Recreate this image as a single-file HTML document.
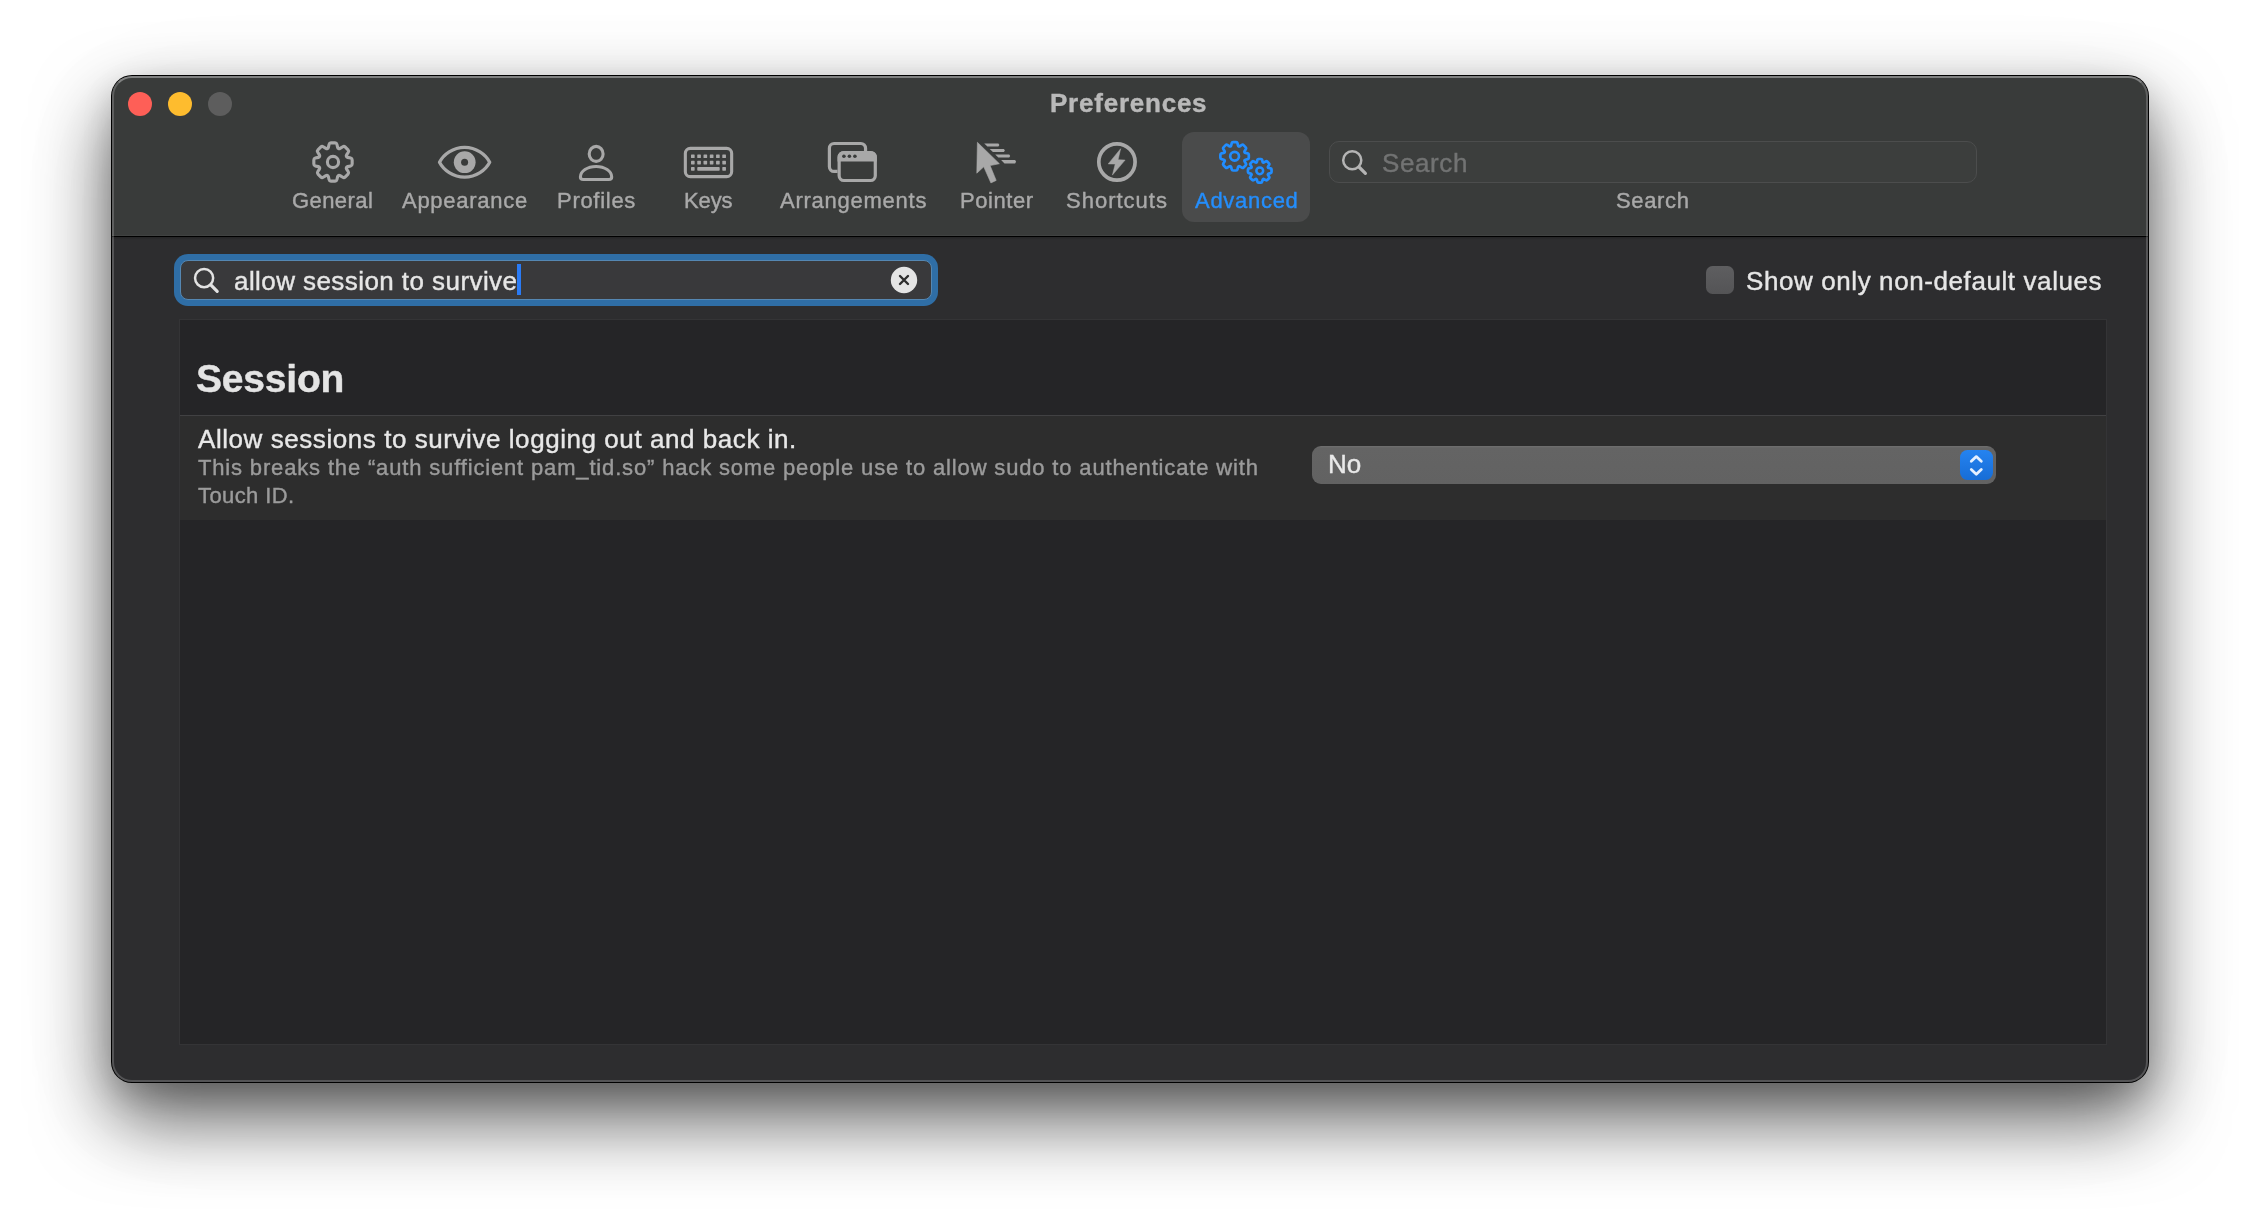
<!DOCTYPE html>
<html lang="en"><head><meta charset="utf-8"><title>Preferences</title>
<style>
html,body{margin:0;padding:0;}
body{width:2260px;height:1230px;background:#fff;position:relative;overflow:hidden;font-family:"Liberation Sans",sans-serif;}
.abs{position:absolute;}
#win{position:absolute;left:111px;top:75px;width:2038px;height:1008px;border-radius:21px;background:#000;
 box-shadow:0 36px 76px 0 rgba(0,0,0,.62),0 12px 30px rgba(0,0,0,.14),0 24px 120px rgba(0,0,0,.05);}
#winin{position:absolute;left:1px;top:1px;right:1px;bottom:1px;border-radius:20px;overflow:hidden;background:#2d2d2f;}
#winhl{position:absolute;left:1px;top:1px;right:1px;bottom:1px;border-radius:20px;border:2px solid rgba(255,255,255,.19);border-top-color:rgba(255,255,255,.36);box-sizing:border-box;pointer-events:none;}
#tb{position:absolute;left:0;top:0;right:0;height:160px;background:#393b3a;}
#tbsep{position:absolute;left:0;right:0;top:160px;height:1px;background:#000;box-shadow:0 -1px 0 rgba(255,255,255,.04);}
#tbsh{position:absolute;left:0;right:0;top:161px;height:3px;background:linear-gradient(rgba(0,0,0,.2),rgba(0,0,0,0));}
.t{position:absolute;white-space:nowrap;line-height:1;will-change:transform;-webkit-text-stroke:.4px currentColor;}
.lbl{font-size:22px;color:#a9a9a9;}
.ic{position:absolute;overflow:visible;}
</style></head><body>
<div id="win"><div id="winin">
 <div id="tb"></div><div id="tbsep"></div><div id="tbsh"></div>
</div><div id="winhl"></div></div>

<!-- traffic lights -->
<div class="abs" style="left:127.8px;top:91.900px;width:24.400px;height:24.400px;border-radius:50%;background:#fe5f57;"></div>
<div class="abs" style="left:167.8px;top:91.900px;width:24.400px;height:24.400px;border-radius:50%;background:#febc2e;"></div>
<div class="abs" style="left:207.8px;top:91.900px;width:24.400px;height:24.400px;border-radius:50%;background:#5d5d5d;"></div>

<div class="t" id="title" style="left:1050px;top:90px;font-size:26px;font-weight:700;color:#b9b9b9;letter-spacing:.77px;">Preferences</div>

<!-- selected tab bg -->
<div class="abs" style="left:1182px;top:132px;width:128px;height:90px;border-radius:12px;background:#4a4b4b;"></div>

<!-- toolbar icons -->
<svg class="ic" id="i-general" style="left:312px;top:141px" width="42" height="42" viewBox="0 0 42 42" fill="none" stroke="#a8a8a8" stroke-width="3.1" stroke-linejoin="round">
 <path d="M15.46 7.62Q16.16 7.33 16.38 6.38L17.11 3.25Q17.45 1.83 18.91 1.83L23.09 1.83Q24.55 1.83 24.89 3.25L25.62 6.38Q25.84 7.33 26.54 7.62L26.54 7.62Q27.24 7.91 28.07 7.40L30.80 5.70Q32.04 4.93 33.08 5.96L36.04 8.92Q37.07 9.96 36.30 11.20L34.60 13.93Q34.09 14.76 34.38 15.46L34.38 15.46Q34.67 16.16 35.62 16.38L38.75 17.11Q40.17 17.45 40.17 18.91L40.17 23.09Q40.17 24.55 38.75 24.89L35.62 25.62Q34.67 25.84 34.38 26.54L34.38 26.54Q34.09 27.24 34.60 28.07L36.30 30.80Q37.07 32.04 36.04 33.08L33.08 36.04Q32.04 37.07 30.80 36.30L28.07 34.60Q27.24 34.09 26.54 34.38L26.54 34.38Q25.84 34.67 25.62 35.62L24.89 38.75Q24.55 40.17 23.09 40.17L18.91 40.17Q17.45 40.17 17.11 38.75L16.38 35.62Q16.16 34.67 15.46 34.38L15.46 34.38Q14.76 34.09 13.93 34.60L11.20 36.30Q9.96 37.07 8.92 36.04L5.96 33.08Q4.93 32.04 5.70 30.80L7.40 28.07Q7.91 27.24 7.62 26.54L7.62 26.54Q7.33 25.84 6.38 25.62L3.25 24.89Q1.83 24.55 1.83 23.09L1.83 18.91Q1.83 17.45 3.25 17.11L6.38 16.38Q7.33 16.16 7.62 15.46L7.62 15.46Q7.91 14.76 7.40 13.93L5.70 11.20Q4.93 9.96 5.96 8.92L8.92 5.96Q9.96 4.93 11.20 5.70L13.93 7.40Q14.76 7.91 15.46 7.62Z"/><circle cx="21" cy="21" r="5.6"/></svg>

<svg class="ic" id="i-appearance" style="left:436px;top:143px" width="58" height="38" viewBox="0 0 58 38" fill="none" stroke="#a8a8a8" stroke-width="3.3">
 <path d="M3.5 19.3C7.5 11.5 17 4.45 28.6 4.45S49.7 11.5 53.7 19.3C49.7 27.1 40.2 34.15 28.6 34.15S7.5 27.1 3.5 19.3Z" stroke-linejoin="round"/>
 <circle cx="28.7" cy="19.2" r="10.9" fill="#a8a8a8" stroke="none"/><circle cx="28.6" cy="19.2" r="3.5" fill="#393b3a" stroke="none"/></svg>

<svg class="ic" id="i-profiles" style="left:576px;top:143px" width="40" height="40" viewBox="0 0 40 40" fill="none" stroke="#a8a8a8" stroke-width="3.1">
 <ellipse cx="20.15" cy="10.9" rx="6.95" ry="7.5"/>
 <path d="M7.2 36.55C5.2 36.55 4.4 35.6 4.4 34C4.4 28.2 11.4 23.45 20.05 23.45S35.7 28.2 35.7 34C35.7 35.6 34.9 36.55 32.9 36.55Z" stroke-linejoin="round"/></svg>

<svg class="ic" id="i-keys" style="left:682px;top:145px" width="54" height="36" viewBox="0 0 54 36" fill="none" stroke="#a8a8a8" stroke-width="3.1">
 <rect x="3.35" y="3.35" width="46.3" height="28.3" rx="5"/>
 <g fill="#a8a8a8" stroke="none"><rect x="9.0" y="9.4" width="3.65" height="3.6" rx=".6"/><rect x="15.25" y="9.4" width="3.65" height="3.6" rx=".6"/><rect x="21.5" y="9.4" width="3.65" height="3.6" rx=".6"/><rect x="27.8" y="9.4" width="3.65" height="3.6" rx=".6"/><rect x="34.05" y="9.4" width="3.65" height="3.6" rx=".6"/><rect x="40.3" y="9.4" width="3.65" height="3.6" rx=".6"/><rect x="9.0" y="15.8" width="3.65" height="3.6" rx=".6"/><rect x="15.25" y="15.8" width="3.65" height="3.6" rx=".6"/><rect x="21.5" y="15.8" width="3.65" height="3.6" rx=".6"/><rect x="27.8" y="15.8" width="3.65" height="3.6" rx=".6"/><rect x="34.05" y="15.8" width="3.65" height="3.6" rx=".6"/><rect x="40.3" y="15.8" width="3.65" height="3.6" rx=".6"/><rect x="9" y="22.1" width="3.65" height="3.6" rx=".6"/><rect x="15.25" y="22.1" width="22.45" height="3.6" rx=".8"/><rect x="40.3" y="22.1" width="3.65" height="3.6" rx=".6"/></g></svg>

<svg class="ic" id="i-arr" style="left:826px;top:140px" width="54" height="44" viewBox="0 0 54 44" fill="none" stroke="#a8a8a8" stroke-width="3.2">
 <path d="M11.55 31.4H8.1A4.7 4.7 0 0 1 3.4 26.7V8.2A4.7 4.7 0 0 1 8.1 3.5H34.85A4.7 4.7 0 0 1 39.55 8.2V11"/>
 <rect x="13.15" y="12.6" width="36.15" height="27.9" rx="4.7"/>
 <path d="M11.55 21.4V17.3A6.3 6.3 0 0 1 17.85 11H44.6A6.3 6.3 0 0 1 50.9 17.3V21.4Z" fill="#a8a8a8" stroke="none"/>
 <g fill="#393b3a" stroke="none"><circle cx="17.9" cy="16.3" r="1.8"/><circle cx="23.4" cy="16.3" r="1.8"/><circle cx="28.9" cy="16.3" r="1.8"/></g></svg>

<svg class="ic" id="i-pointer" style="left:974px;top:140px" width="46" height="46" viewBox="0 0 46 46" fill="#a8a8a8" stroke="none">
 <path d="M3.4 2.3L2.8 33.2L9.75 26.85L16.9 42.9L22.2 40.4L16.1 25.6L25.4 23.7Z" stroke="#a8a8a8" stroke-width=".6" stroke-linejoin="round"/>
 <path d="M10.2 3.4H24.4L25.4 5.00L24.4 6.6H13.40Z"/><path d="M15.7 8.9H29.9L30.9 10.50L29.9 12.1H18.90Z"/><path d="M21.2 14.4H35.2L36.2 15.98L35.2 17.55H24.35Z"/><path d="M27.1 20.1H41.1L42.1 21.80L41.1 23.5H30.50Z"/></svg>

<svg class="ic" id="i-short" style="left:1095px;top:140px" width="44" height="44" viewBox="0 0 44 44" fill="none" stroke="#a8a8a8" stroke-width="3.7">
 <circle cx="21.95" cy="22" r="18.15"/>
 <path d="M25.65 8.7L13.2 23.9L20.2 24.1L17.4 35.1L30.1 20.1L23.1 19.7Z" fill="#a8a8a8" stroke="#a8a8a8" stroke-width=".5" stroke-linejoin="round"/></svg>

<svg class="ic" id="i-adv" style="left:1215px;top:138px" width="62" height="50" viewBox="0 0 62 50" fill="none" stroke="#218dff" stroke-width="2.7" stroke-linejoin="round">
 <g transform="translate(19.6 18.3)"><path d="M-4.09 -9.87Q-3.57 -10.09 -3.41 -10.79L-2.87 -13.15Q-2.63 -14.21 -1.55 -14.21L1.55 -14.21Q2.63 -14.21 2.87 -13.15L3.41 -10.79Q3.57 -10.09 4.09 -9.87L4.09 -9.87Q4.61 -9.66 5.22 -10.04L7.27 -11.33Q8.18 -11.91 8.95 -11.14L11.14 -8.95Q11.91 -8.18 11.33 -7.27L10.04 -5.22Q9.66 -4.61 9.87 -4.09L9.87 -4.09Q10.09 -3.57 10.79 -3.41L13.15 -2.87Q14.21 -2.63 14.21 -1.55L14.21 1.55Q14.21 2.63 13.15 2.87L10.79 3.41Q10.09 3.57 9.87 4.09L9.87 4.09Q9.66 4.61 10.04 5.22L11.33 7.27Q11.91 8.18 11.14 8.95L8.95 11.14Q8.18 11.91 7.27 11.33L5.22 10.04Q4.61 9.66 4.09 9.87L4.09 9.87Q3.57 10.09 3.41 10.79L2.87 13.15Q2.63 14.21 1.55 14.21L-1.55 14.21Q-2.63 14.21 -2.87 13.15L-3.41 10.79Q-3.57 10.09 -4.09 9.87L-4.09 9.87Q-4.61 9.66 -5.22 10.04L-7.27 11.33Q-8.18 11.91 -8.95 11.14L-11.14 8.95Q-11.91 8.18 -11.33 7.27L-10.04 5.22Q-9.66 4.61 -9.87 4.09L-9.87 4.09Q-10.09 3.57 -10.79 3.41L-13.15 2.87Q-14.21 2.63 -14.21 1.55L-14.21 -1.55Q-14.21 -2.63 -13.15 -2.87L-10.79 -3.41Q-10.09 -3.57 -9.87 -4.09L-9.87 -4.09Q-9.66 -4.61 -10.04 -5.22L-11.33 -7.27Q-11.91 -8.18 -11.14 -8.95L-8.95 -11.14Q-8.18 -11.91 -7.27 -11.33L-5.22 -10.04Q-4.61 -9.66 -4.09 -9.87Z"/><circle r="4.4"/></g>
 <g transform="translate(44.75 32.8)"><path d="M-3.40 -8.21Q-2.97 -8.39 -2.84 -8.97L-2.39 -10.92Q-2.19 -11.80 -1.29 -11.80L1.29 -11.80Q2.19 -11.80 2.39 -10.92L2.84 -8.97Q2.97 -8.39 3.40 -8.21L3.40 -8.21Q3.83 -8.03 4.34 -8.35L6.03 -9.41Q6.80 -9.89 7.43 -9.25L9.25 -7.43Q9.89 -6.80 9.41 -6.03L8.35 -4.34Q8.03 -3.83 8.21 -3.40L8.21 -3.40Q8.39 -2.97 8.97 -2.84L10.92 -2.39Q11.80 -2.19 11.80 -1.29L11.80 1.29Q11.80 2.19 10.92 2.39L8.97 2.84Q8.39 2.97 8.21 3.40L8.21 3.40Q8.03 3.83 8.35 4.34L9.41 6.03Q9.89 6.80 9.25 7.43L7.43 9.25Q6.80 9.89 6.03 9.41L4.34 8.35Q3.83 8.03 3.40 8.21L3.40 8.21Q2.97 8.39 2.84 8.97L2.39 10.92Q2.19 11.80 1.29 11.80L-1.29 11.80Q-2.19 11.80 -2.39 10.92L-2.84 8.97Q-2.97 8.39 -3.40 8.21L-3.40 8.21Q-3.83 8.03 -4.34 8.35L-6.03 9.41Q-6.80 9.89 -7.43 9.25L-9.25 7.43Q-9.89 6.80 -9.41 6.03L-8.35 4.34Q-8.03 3.83 -8.21 3.40L-8.21 3.40Q-8.39 2.97 -8.97 2.84L-10.92 2.39Q-11.80 2.19 -11.80 1.29L-11.80 -1.29Q-11.80 -2.19 -10.92 -2.39L-8.97 -2.84Q-8.39 -2.97 -8.21 -3.40L-8.21 -3.40Q-8.03 -3.83 -8.35 -4.34L-9.41 -6.03Q-9.89 -6.80 -9.25 -7.43L-7.43 -9.25Q-6.80 -9.89 -6.03 -9.41L-4.34 -8.35Q-3.83 -8.03 -3.40 -8.21Z"/><circle r="3.4" stroke-width="2.5"/></g></svg>

<!-- toolbar labels -->
<div class="t lbl" id="l0" style="left:292px;top:190px;letter-spacing:0.42px;">General</div>
<div class="t lbl" id="l1" style="left:402px;top:190px;letter-spacing:0.72px;">Appearance</div>
<div class="t lbl" id="l2" style="left:557px;top:190px;letter-spacing:0.71px;">Profiles</div>
<div class="t lbl" id="l3" style="left:684px;top:190px;letter-spacing:-0.1px;">Keys</div>
<div class="t lbl" id="l4" style="left:780px;top:190px;letter-spacing:0.75px;">Arrangements</div>
<div class="t lbl" id="l5" style="left:960px;top:190px;letter-spacing:0.58px;">Pointer</div>
<div class="t lbl" id="l6" style="left:1066px;top:190px;letter-spacing:1.0px;">Shortcuts</div>
<div class="t lbl" id="l7" style="left:1195px;top:190px;letter-spacing:0.71px;color:#248efc;">Advanced</div>
<div class="t lbl" id="l8" style="left:1616px;top:190px;letter-spacing:0.64px;">Search</div>

<!-- toolbar search -->
<div class="abs" style="left:1329px;top:141px;width:648px;height:42px;box-sizing:border-box;border:1px solid #4c4d4d;border-radius:10px;background:#3c3e3d;"></div>
<svg class="ic" id="i-mag1" style="left:1340px;top:148px" width="30" height="30" viewBox="0 0 30 30" fill="none" stroke="#b4b4b4" stroke-linecap="round">
 <circle cx="12.25" cy="12.25" r="9.05" stroke-width="2.5"/><path d="M19 19L25.400 25.400" stroke-width="3.2"/></svg>
<div class="t" id="ph" style="left:1382px;top:150px;letter-spacing:.6px;font-size:26px;color:#727373;">Search</div>

<!-- content search -->
<div class="abs" style="left:173.800px;top:253.700px;width:764.600px;height:52.400px;border-radius:14px;background:#2f6ea6;"></div>
<div class="abs" style="left:180px;top:260.200px;width:752.400px;height:39.700px;box-sizing:border-box;border:1px solid #5587b2;border-radius:8px;background:#39393b;"></div>
<svg class="ic" id="i-mag2" style="left:191px;top:266px" width="30" height="30" viewBox="0 0 30 30" fill="none" stroke="#e2e2e2" stroke-linecap="round">
 <circle cx="13.1" cy="12.1" r="9.05" stroke-width="2.5"/><path d="M19.800 18.800L26.200 25.300" stroke-width="3.2"/></svg>
<div class="t" id="q" style="left:234px;top:268px;letter-spacing:.43px;font-size:26px;color:#e6e6e6;">allow session to survive</div>
<div class="abs" style="left:517px;top:264px;width:3.5px;height:31px;background:#2a7bf5;"></div>
<svg class="ic" id="i-clear" style="left:890px;top:266px" width="28" height="28" viewBox="0 0 28 28">
 <circle cx="14" cy="14" r="13.2" fill="#e4e4e4"/><path d="M10 10L18 18M18 10L10 18" stroke="#2d2d2d" stroke-width="2.4" stroke-linecap="round"/></svg>

<!-- checkbox -->
<div class="abs" style="left:1706px;top:266px;width:28px;height:28px;border-radius:6.5px;background:linear-gradient(#5e5e60,#545456);"></div>
<div class="t" id="cb" style="left:1746px;top:268px;letter-spacing:.59px;font-size:26px;color:#e6e6e6;">Show only non-default values</div>

<!-- panel -->
<div class="abs" style="left:179px;top:319px;width:1928px;height:726px;box-sizing:border-box;border:1px solid #343436;background:#252527;"></div>
<div class="t" id="sess" style="left:196px;top:359px;letter-spacing:-.2px;font-size:39px;font-weight:700;color:#e4e4e4;">Session</div>
<div class="abs" style="left:180px;top:415px;width:1926px;height:1px;background:#414143;"></div>
<div class="abs" style="left:180px;top:416px;width:1926px;height:104px;background:#2d2d2d;"></div>
<div class="t" id="rt" style="left:198px;top:426px;letter-spacing:.56px;font-size:26px;color:#e8e8e8;">Allow sessions to survive logging out and back in.</div>
<div class="t" id="rs1" style="left:197.500px;letter-spacing:.84px;top:457px;font-size:22px;color:#9b9b9b;">This breaks the “auth sufficient pam_tid.so” hack some people use to allow sudo to authenticate with</div>
<div class="t" id="rs2" style="left:197.500px;letter-spacing:.4px;top:485px;font-size:22px;color:#9b9b9b;">Touch ID.</div>

<!-- select -->
<div class="abs" style="left:1312px;top:446px;width:684px;height:38px;border-radius:9px;background:linear-gradient(#707070 0,#646464 2px,#626262 100%);"></div>
<div class="t" id="no" style="left:1328px;top:451px;font-size:26px;color:#e9e9e9;">No</div>
<div class="abs" style="left:1959.800px;top:449.800px;width:33px;height:30.500px;border-radius:7.5px;background:linear-gradient(#2583f0,#176dd6);"></div>
<svg class="ic" id="i-chev" style="left:1959.800px;top:449.800px" width="33" height="31" viewBox="0 0 33 31" fill="none" stroke="#e4f0ff" stroke-width="2.8" stroke-linecap="round" stroke-linejoin="round">
 <path d="M11.300 11.300L16.300 6.600L21.300 11.300"/><path d="M11.300 19.500L16.300 24.200L21.300 19.500"/></svg>
</body></html>
